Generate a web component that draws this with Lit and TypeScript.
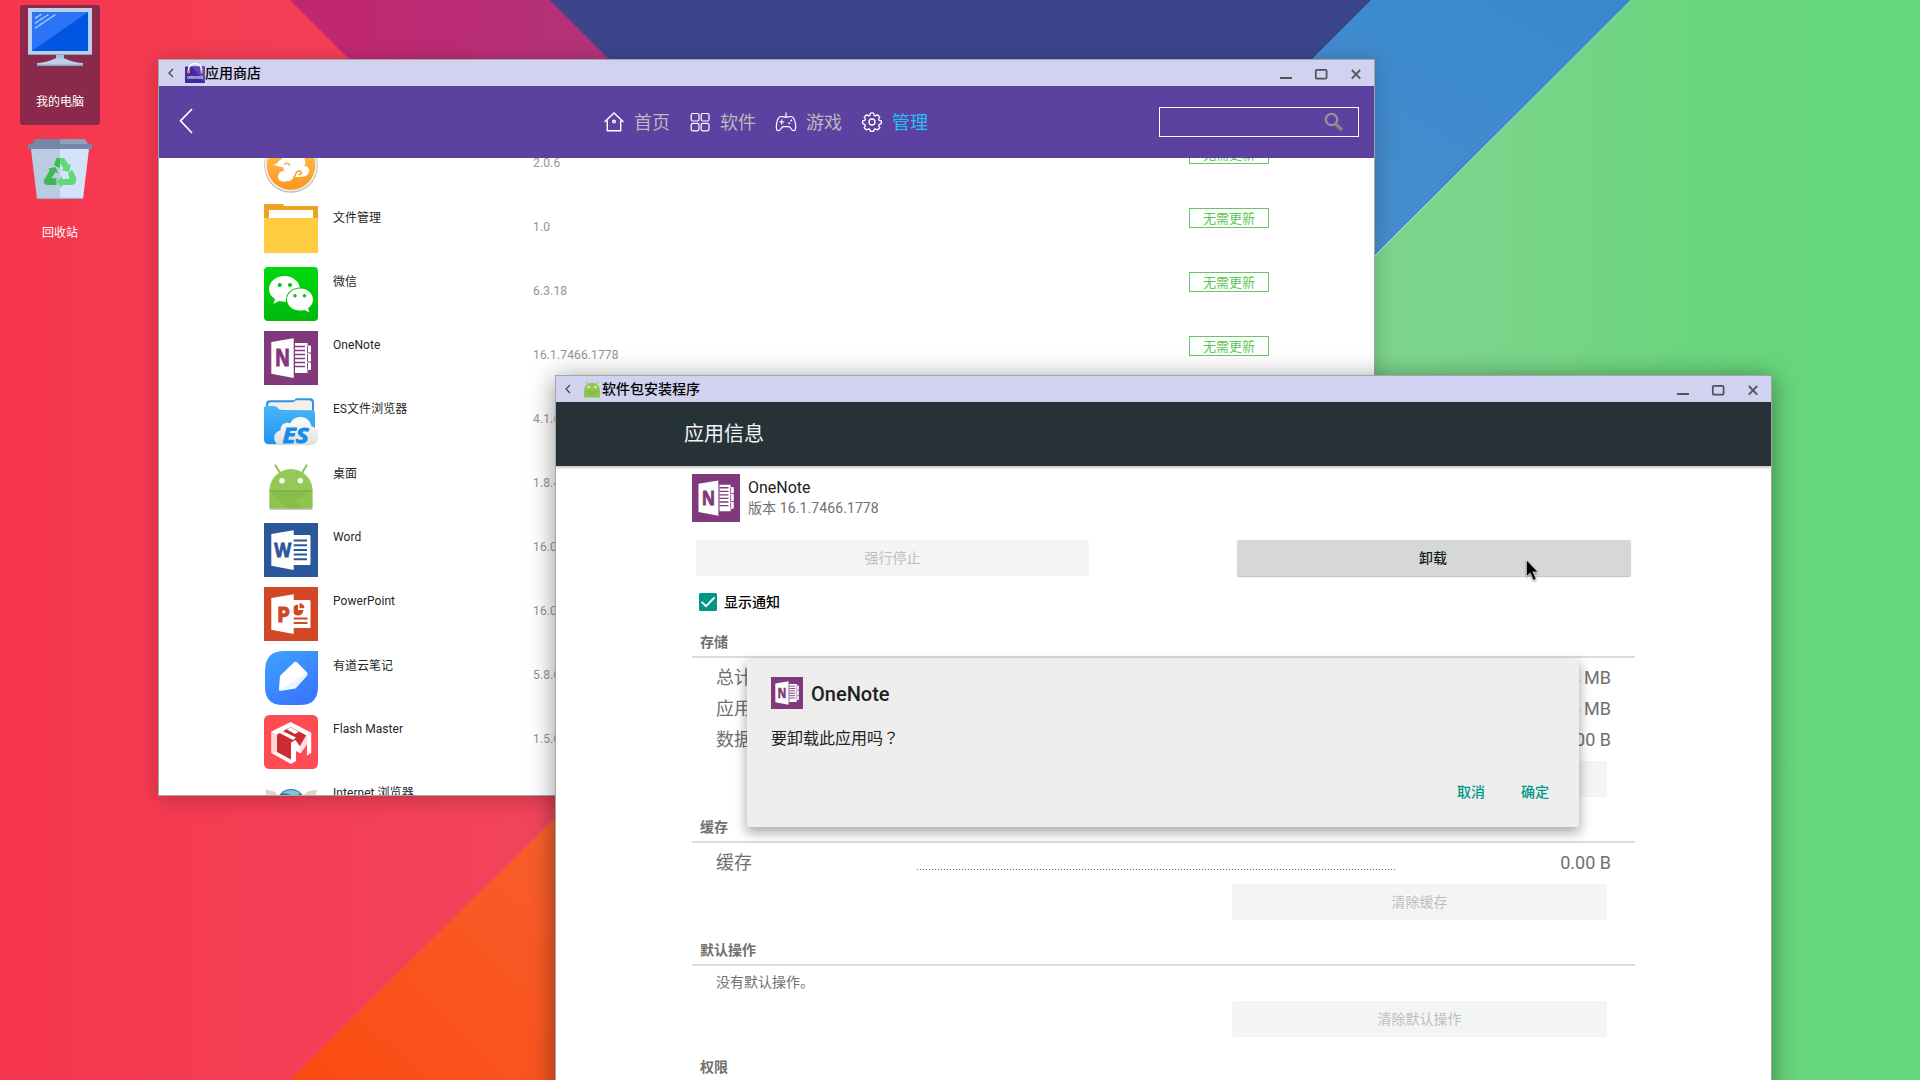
import { LitElement, html, svg, css } from "lit";
import { customElement, property } from "lit/decorators.js";

const officePage = svg`<path d="M7.3 11 29.7 7.3v39.6L7.3 42.8z" fill="#fff"/>`;

const icons: Record<string, [string, unknown]> = {
  computer: ["0 0 64 58", svg`
    <path d="M28 46h8v7h-8z" fill="#a9bfdd"/>
    <path d="M9 58v-3c7 0 14-2.500 18-4.500h10c4 2 11 4.500 18 4.500v3z" fill="#bcd0ea"/>
    <path d="M9 56.500h46V58H9z" fill="#8fa6c6"/>
    <path d="M0 0h64v47H0z" fill="#bcd0ea"/><path d="M0 46h64v1H0z" fill="#8fa6c6"/>
    <path d="M4 4h56v39H4z" fill="#0055e2"/><path d="M4 4h56L4 43z" fill="#2b74f5"/>
    <g stroke="#a9c8ff" stroke-width="1.500" stroke-linecap="round" stroke-dasharray="3 1.600 5 1.600 1 1.600">
      <path d="M7.500 10 13 6.500M7.500 15 20 6.800M7.500 20 27 6.800"/></g>`],
  trash: ["0 0 64 60", svg`
    <path d="M7 0h25v7H3z" fill="#7686a8"/><path d="M32 0h25l4 7H32z" fill="#90a0b8"/>
    <path d="M3 10h29v50H9z" fill="#b9cce4"/><path d="M32 10h29l-6 50H32z" fill="#d3e3f9"/>
    <path d="M9 58.700h46V60H9z" fill="#9db4cc"/>
    <path d="M0 5h64v5H0z" fill="#7686a8"/>
    <g fill="#3dbb50"><path d="M28.500 19H32v8.500l-1 1.500-5-3z"/><path d="m20.500 29.500 7-1.500 3 6.500-3-1.500-4 6 5 .500V46H20c-4 0-5-3-3.500-6l5-8z"/></g>
    <g fill="#62d877"><path d="M32 19h4l5 7 2-1-2 8-8-2 2.500-1.500L32 24z"/><path d="m40 34 4-3.500 3.500 6.500c2 4.500 0 9-4 9H34v3l-5-6 5-6v3h7.500z"/></g>`],
  shop: ["0 0 20 20", svg`
    <path d="M0 3.500h20V20H0z" fill="#3f2aa0"/><path d="M7 3.500h13V20z" fill="#5b47c0"/>
    <path d="M3.500 8.500V6.500a6.500 6 0 0 1 13 0v2" fill="none" stroke="#fff" stroke-width="1.600"/>
    <circle cx="3.500" cy="9" r="1.500" fill="#f68b1f"/><circle cx="16.500" cy="9" r="1.500" fill="#f68b1f"/>
    <text x="2" y="15.700" font-size="3.600" font-weight="700" textLength="16" fill="#d9d4f4">OPENTHOS</text>`],
  android: ["0 0 54 54", svg`
    <path d="M11.500 6.500 16 14M42.500 6.500 38 14" stroke="#97c167" stroke-width="2.200" stroke-linecap="round"/>
    <path d="M5.500 50V31a21.500 21 0 0 1 43 0v19z" fill="#c9c9c9" transform="translate(0 1)"/>
    <path d="M5.500 31.500a21.500 21.500 0 0 1 43 0z" fill="#93c954"/>
    <path d="M5.500 31.500h43V48a1.500 1.500 0 0 1-1.500 1.500H7A1.500 1.500 0 0 1 5.500 48z" fill="#8ec64d"/>
    <path d="m6 32 17.500 17.500h16L31 41 48 32z" fill="#83b848" opacity=".6"/>
    <path d="M5.500 31.200h43v1h-43z" fill="#77ad3e"/>
    <circle cx="18" cy="21.800" r="2.700" fill="#fff"/><circle cx="36.300" cy="21.800" r="2.700" fill="#fff"/>`],
  cloud: ["0 0 54 54", svg`
    <defs><linearGradient id="g" x2="0" y2="1"><stop stop-color="#ffc65a"/><stop offset="1" stop-color="#ff941f"/></linearGradient></defs>
    <circle cx="27" cy="27" r="26.800" fill="#b9b9b9"/><circle cx="27" cy="26.500" r="26" fill="#f3f3f3"/>
    <circle cx="27" cy="26.500" r="24.300" fill="url(#g)"/>
    <path d="M9 25c5 1 5-4 9-5 2-6 10-8 14-3 5-2 9 1 9 5 1 2 0 4-1 5 4 0 6 3 5 6-1 4-5 5-10 5h-4c-3 1-4 5-8 4-4 2-9 0-9-4 0-3 2-6 6-6l-1-4c-4 0-7-1-10-3z" fill="#fff"/>
    <path d="M30 38c2-1 1-6 5-6 3 0 3 4 0 3.500" fill="none" stroke="#ff9f2c" stroke-width="1.600" stroke-linecap="round"/>
    <path d="M20 26c2-3 5-2 6 1" fill="none" stroke="#ffae3c" stroke-width="1.500"/>`],
  folder: ["0 0 54 54", svg`
    <path d="M0 1h19l1 2h34v20H0z" fill="#eda322"/><path d="M5 7h44v10H5z" fill="#fff"/>
    <path d="M0 15h54v35H0z" fill="#ffcc42"/>`],
  wechat: ["0 0 54 54", svg`
    <defs><linearGradient id="g" x2="0" y2="1"><stop stop-color="#00d910"/><stop offset="1" stop-color="#00b80d"/></linearGradient></defs>
    <rect width="54" height="54" rx="4" fill="url(#g)"/>
    <path d="M20.500 9C11.800 9 5 14.800 5 22c0 4 2 7.500 6 10l-1.500 5 5.500-3c2 .6 3.800.8 5.500.8C29 34.800 36 29 36 22S29 9 20.500 9z" fill="#fff"/>
    <ellipse cx="36" cy="32.500" rx="14" ry="12" fill="#00c60e"/>
    <path d="M36 21.500c-7.200 0-13 4.800-13 11s5.800 11 13 11c1.500 0 3-.2 4.300-.6l5 2.300-1.300-4c3-2 5-5 5-8.700 0-6.200-5.800-11-13-11z" fill="#fff"/>
    <g fill="#00c60e"><circle cx="15.700" cy="18" r="2.100"/><circle cx="26" cy="18" r="2.100"/><circle cx="31" cy="28.700" r="1.700"/><circle cx="40.500" cy="28.700" r="1.700"/></g>`],
  onenote: ["0 0 54 54", svg`
    <path d="M0 0h54v54H0z" fill="#80397b"/>
    <path d="M31 12h12.500v2.500H46a1 1 0 0 1 1 1v6.500h-1v.8h1v8h-1v.8h1V38a1 1 0 0 1-1 1h-2.500v3H31z" fill="#fff"/>
    <path d="M31 15.500h10M31 19.500h10M31 23.500h10M31 27.500h10M31 31.500h10M31 35.500h10" stroke="#80397b" stroke-width="1.500"/>
    <path d="M43.500 15v7h3.500M43.500 23v8h3.500M43.500 32v6.500" stroke="#80397b" stroke-width=".9" fill="none"/>
    ${officePage}
    <text x="11" y="35.300" font-size="23" font-weight="700" textLength="15" lengthAdjust="spacingAndGlyphs" fill="#80397b" stroke="#80397b" stroke-width="1">N</text>`],
  word: ["0 0 54 54", svg`
    <path d="M0 0h54v54H0z" fill="#2a579a"/>
    <rect x="28" y="12" width="18.500" height="30" rx="1" fill="#fff"/>
    <path d="M29 17.500h14M29 22.200h14M29 26.900h14M29 31.600h14M29 36.300h14" stroke="#2a579a" stroke-width="2"/>
    ${officePage}
    <text x="10.300" y="33.500" font-size="19.500" font-weight="700" textLength="17" lengthAdjust="spacingAndGlyphs" fill="#2a579a" stroke="#2a579a" stroke-width=".8">W</text>`],
  powerpoint: ["0 0 54 54", svg`
    <path d="M0 0h54v54H0z" fill="#d24726"/>
    <rect x="28" y="13" width="18.500" height="28" rx="1" fill="#fff"/>
    <path d="M34 17.500v5.500h5.500a5.500 5.500 0 1 1-5.500-5.500z" fill="#d24726"/><path d="M35.500 16.200a5 5 0 0 1 5 5h-5z" fill="#d24726"/>
    <path d="M29 31.500h14.500M29 36h14.500" stroke="#d24726" stroke-width="2"/>
    ${officePage}
    <text x="13" y="34.700" font-size="21.500" font-weight="700" textLength="13" lengthAdjust="spacingAndGlyphs" fill="#d24726" stroke="#d24726" stroke-width="1">P</text>`],
  es: ["0 0 54 54", svg`
    <defs><linearGradient id="g" x2="0" y2="1"><stop stop-color="#4cb6f8"/><stop offset="1" stop-color="#1d93f0"/></linearGradient>
    <linearGradient id="c" x2="0" y2="1"><stop stop-color="#fff"/><stop offset="1" stop-color="#dedede"/></linearGradient></defs>
    <g transform="translate(0 2.300)">
    <path d="M2 14V7q0-4 4-4h24l2-2h14q4 0 4 4v12z" fill="#2f93e6"/>
    <path d="M4 12V8q0-3 3-3h22l3-2h13q3 0 3 3v8z" fill="#f3efe9"/>
    <path d="M0 11q0-3 3-2.500l9 .5 4 4h32q3 0 3 3v28q0 3-3 3H5q-5 0-5-5z" fill="url(#g)"/>
    <path d="M16 48c-9 0-10-13-1-15 0-6 5-9 10-7 3-9 19-9 21 3 9 2 11 18-2 19z" transform="translate(1.500 0)" fill="url(#c)"/></g>
    <text x="18.500" y="47.500" font-size="20.500" font-weight="700" font-style="italic" textLength="26" lengthAdjust="spacingAndGlyphs" fill="#168bea" stroke="#168bea" stroke-width=".9">ES</text>`],
  note: ["0 0 54 54", svg`
    <defs><linearGradient id="g" x2=".6" y2="1"><stop stop-color="#3fa3ff"/><stop offset="1" stop-color="#3877ff"/></linearGradient></defs>
    <path d="M1 20Q1 0 20 0h34v36q0 18-18 18H19Q1 54 1 36z" fill="url(#g)"/>
    <path d="M30 11.500q1.500-1.300 3 0l10 10q1.500 1.500 0 3.300L31.500 37.500 16 40q-1-.5-1-1.500l1-13.500z" fill="#e9f4ff"/>
    <path d="M30 11.500q1.500-1.300 3 0l10 10L15.500 39.500 16 25z" fill="#fff"/>`],
  flash: ["0 0 54 54", svg`
    <rect width="54" height="54" rx="5.500" fill="#ff4b52"/>
    <path d="M12 18 27 11l15 9-10 16-5 9-15-8z" fill="#cb2b31"/>
    <path d="M32 37 43 22v8l-6.500 9z" fill="#ff4b52"/>
    <path d="M7.500 16.500 26.500 7 47 17.500l-4.500 3-16-8.500L13 19.500V37l14 7.500V49L7.500 38z" fill="#fff"/>
    <path d="m7.500 16.500 5.500 3V37l-5.500 1z" fill="#ffd6d8"/>
    <path d="m15.500 18 3-2L32 22.500l-3 2.500zM23 14.500l3.500-2.300 8 4.500-3.500 2.300z" fill="#fff"/>
    <path d="M27 27.500 31.500 25 36 31.500 43 19.500 47.200 17.500V38L43 40.500V29L36.500 38.500 32 36V46L27 49z" fill="#fff"/>
    <path d="M43 19.500 36 31.500l.500 7L43 29z" fill="#ffdcde"/>`],
  internet: ["0 0 54 54", svg`
    <path d="M1 11c7 0 12 2 14 7L4 22zM53 11c-7 0-12 2-14 7l11 4z" fill="#e0d5c2"/>
    <circle cx="27" cy="24" r="14" fill="#2f76a8"/><path d="M18 14q9-6 18 0-4 4-9 2t-9-2z" fill="#7fc4e4"/>`],
  back: ["0 0 14 26", svg`<path d="M13 1 1.500 12.800 13 25" fill="none" stroke="#fff" stroke-width="1.700"/>`],
  chevron: ["0 0 6 10", svg`<path d="M5 1 1 5l4 4" fill="none" stroke="#444" stroke-width="1.200"/>`],
  minimize: ["0 0 14 14", svg`<path d="M1 11h12" stroke="#555" stroke-width="2"/>`],
  maximize: ["0 0 14 14", svg`<rect x="1.800" y="2.800" width="10.800" height="8.900" rx="1.200" fill="none" stroke="#505055" stroke-width="1.700"/>`],
  close: ["0 0 14 14", svg`<path d="m2.800 3 8.400 8.600M11.200 3l-8.400 8.600" stroke="#555" stroke-width="1.800"/>`],
  home: ["0 0 22 22", svg`<g fill="none" stroke="#fff" stroke-width="1.400"><path d="M1.500 11 11 2l9.500 9M4.300 9.500v10.300h13.400V9.500"/><circle cx="11" cy="10.600" r="1.300"/></g>`],
  grid: ["0 0 22 22", svg`<g fill="none" stroke="#fff" stroke-width="1.200"><rect x="2.200" y="2.500" width="7.800" height="7.500" rx="1.500"/><rect x="12.200" y="2.500" width="7.800" height="7.500" rx="1.500"/><rect x="2.200" y="12.300" width="7.800" height="7.500" rx="1.500"/><rect x="12.200" y="12.300" width="7.800" height="7.500" rx="1.500"/></g>`],
  gamepad: ["0 0 22 22", svg`<g fill="none" stroke="#fff" stroke-width="1.200"><path d="M11 1.500v4.800M11 6.300c-2 0-3-.8-5-.8C3 5.500 1.300 11 1.300 16c0 2 .7 3.700 2.200 3.700 2.300 0 2.500-4 5-4h5c2.500 0 2.700 4 5 4 1.500 0 2.200-1.700 2.200-3.700 0-5-1.700-10.500-4.700-10.500-2 0-3 .8-5 .8z"/><path d="M6.700 8.500v5M4.200 11h5"/></g><circle cx="14.200" cy="12.300" r="1" fill="#fff"/><circle cx="16.300" cy="9.500" r="1" fill="#fff"/>`],
  gear: ["0 0 22 22", svg`<g fill="none" stroke="#fff" stroke-width="1.300" stroke-linejoin="round"><circle cx="11" cy="11" r="3"/><path d="M9.300 2.200h3.400l.5 2.200 1.300.5 2-1.200 2.300 2.400-1.200 1.900.6 1.400 2.200.5v2.800l-2.200.6-.6 1.400 1.200 2-2.300 2.300-2-1.200-1.300.6-.5 2H9.300l-.5-2-1.300-.6-2 1.200-2.300-2.300 1.200-2-.6-1.400-2.200-.6V9.900l2.200-.5.6-1.400-1.200-1.900 2.300-2.400 2 1.200 1.300-.5z"/></g>`],
  search: ["0 0 20 20", svg`<circle cx="7.500" cy="7.500" r="5.700" fill="none" stroke="#959595" stroke-width="2.300"/><path d="m11.800 12 6.200 6.300" stroke="#858585" stroke-width="3.400"/>`],
  check: ["0 0 18 18", svg`<rect width="18" height="18" rx="1.500" fill="#009688"/><path d="m2.700 8.900 4.300 4.300 8.500-8.700" fill="none" stroke="#fff" stroke-width="1.800"/>`],
  cursor: ["0 0 16 24", svg`<path d="M1.500 1v16.500l3.700-3.600 3.200 7.300 2.700-1.200-3.200-7.100H13z" fill="#000" stroke="#ddd" stroke-width=".7"/>`],
};

@customElement("ui-icon")
export class UiIcon extends LitElement {
  @property() name = "";
  static styles = css`
    :host { display: block; flex: none; }
    .art { display: block; width: 100%; height: 100%; }
    text { font-family: "Open Sans", sans-serif; }
  `;
  render() {
    const [box, art] = icons[this.name];
    return html`<svg class="art" viewBox=${box}>${art}</svg>`;
  }
}

@customElement("ui-window")
export class UiWindow extends LitElement {
  @property() heading = "";
  @property() icon = "";
  static styles = css`
    :host {
      display: flex; flex-direction: column; box-sizing: border-box; width: 1217px; height: 737px;
      border: 1px solid #a5a5a5; background: #fff;
    }
    .title {
      flex: none; display: flex; align-items: center; height: 26px; background: #d1d1f0;
      font: 500 14px/26px Roboto, "Noto Sans CJK SC", sans-serif; color: #000;
    }
    .chevron { width: 6px; height: 10px; margin-left: 9px; }
    .app { width: 20px; height: 20px; margin-left: 11px; }
    .name { flex: 1; }
    .controls { display: flex; gap: 21px; padding-right: 11px; }
    .control { width: 14px; height: 14px; padding-top: 2px; }
    .content { flex: 1; min-height: 0; overflow: hidden; display: flex; flex-direction: column; }
  `;
  render() {
    return html`
      <div class="title">
        <ui-icon class="chevron" name="chevron"></ui-icon>
        <ui-icon class="app" name=${this.icon}></ui-icon>
        <span class="name">${this.heading}</span>
        <div class="controls">
          <ui-icon class="control" name="minimize"></ui-icon>
          <ui-icon class="control" name="maximize"></ui-icon>
          <ui-icon class="control" name="close"></ui-icon>
        </div>
      </div>
      <div class="content"><slot></slot></div>`;
  }
}

const apps = [
  ["cloud", "", "2.0.6"],
  ["folder", "文件管理", "1.0"],
  ["wechat", "微信", "6.3.18"],
  ["onenote", "OneNote", "16.1.7466.1778"],
  ["es", "ES文件浏览器", "4.1.6"],
  ["android", "桌面", "1.8.4"],
  ["word", "Word", "16.0"],
  ["powerpoint", "PowerPoint", "16.0"],
  ["note", "有道云笔记", "5.8.0"],
  ["flash", "Flash Master", "1.5.0"],
  ["internet", "Internet 浏览器", ""],
];

@customElement("store-view")
export class StoreView extends LitElement {
  static styles = css`
    :host { display: flex; flex-direction: column; height: 100%; font-family: Roboto, "Noto Sans CJK SC", sans-serif; }
    .bar { flex: none; height: 72px; background: #5c41a0; display: grid; grid-template-columns: 444px 1fr 200px; align-items: center; padding-right: 15px; }
    .back { width: 14px; height: 26px; margin: 0 0 2px 20px; }
    .nav { display: flex; gap: 19px; }
    .tab { display: flex; align-items: center; gap: 9px; font-size: 18px; line-height: 24px; color: #bababa; }
    .tab span { padding-top: 2px; }
    .tab.on { color: #27c0fb; }
    .glyph { width: 22px; height: 22px; }
    .search { box-sizing: border-box; height: 30px; border: 1px solid #fff; display: flex; align-items: center; justify-content: flex-end; padding-right: 14px; }
    .lens { width: 20px; height: 20px; }
    .list { flex: 1; min-height: 0; overflow: hidden; }
    .rows { margin-top: -19px; padding-left: 105px; }
    .row { height: 64px; display: grid; grid-template-columns: 54px 200px 656px 80px; align-items: start; font-size: 12px; line-height: 16px; }
    .pic { width: 54px; height: 54px; }
    .name { padding: 7px 0 0 15px; color: #262626; white-space: nowrap; }
    .name.latin { padding-top: 6px; letter-spacing: .05px; }
    .version { padding: 16px 0 0 15px; color: #939393; letter-spacing: .14px; }
    .state { box-sizing: border-box; margin: 5px 0 0 15px; width: 80px; height: 20px; border: 1px solid #66c95c; color: #5cc552; font-size: 13px; line-height: 19px; text-align: center; }
  `;
  render() {
    const tabs = [["home", "首页"], ["grid", "软件"], ["gamepad", "游戏"], ["gear", "管理"]];
    return html`
      <div class="bar">
        <ui-icon class="back" name="back"></ui-icon>
        <div class="nav">
          ${tabs.map(([icon, label], i) => html`
            <div class="tab ${i === 3 ? "on" : ""}"><ui-icon class="glyph" name=${icon}></ui-icon><span>${label}</span></div>`)}
        </div>
        <div class="search"><ui-icon class="lens" name="search"></ui-icon></div>
      </div>
      <div class="list"><div class="rows">
        ${apps.map(([icon, name, version]) => html`
          <div class="row">
            <ui-icon class="pic" name=${icon}></ui-icon>
            <span class="name ${/^[A-Z]/.test(name) ? "latin" : ""}">${name}</span>
            <span class="version">${version}</span>
            <div class="state">无需更新</div>
          </div>`)}
      </div></div>`;
  }
}

@customElement("app-details")
export class AppDetails extends LitElement {
  static styles = css`
    :host { display: flex; flex-direction: column; font-family: Roboto, "Noto Sans CJK SC", sans-serif; color: #707070; font-size: 14px; }
    .header { flex: none; height: 64px; padding-left: 128px; background: #273238; color: #f2f3f3; font-size: 20px; line-height: 65px; box-shadow: 0 2px 2px rgba(0, 0, 0, .22); }
    .body { width: 943px; margin-left: 136px; padding-top: 8px; }
    .app { display: flex; gap: 8px; height: 48px; }
    .logo { width: 48px; height: 48px; }
    .who { display: flex; flex-direction: column; padding-top: 3px; }
    .who b { font-weight: 400; font-size: 16px; line-height: 21px; color: #212121; }
    .who span { line-height: 20px; letter-spacing: .1px; }
    .actions { display: flex; justify-content: space-between; padding: 0 4px; margin-top: 18px; height: 36px; }
    .button { height: 36px; line-height: 36px; border-radius: 2px; background: #f3f5f5; color: #bcbebe; text-align: center; }
    .actions .button { width: 393px; }
    .actions .strong { box-sizing: border-box; width: 394px; padding-right: 2px; background: #d6d8d7; color: #1b1c1c; font-weight: 500; box-shadow: 0 1px 1px rgba(0, 0, 0, .25); }
    .notify { display: flex; align-items: center; gap: 7px; height: 52px; padding-left: 7px; color: #000; font-weight: 500; }
    .notify span { padding-bottom: 3px; }
    .check { width: 18px; height: 18px; }
    .heading { box-sizing: border-box; height: 30px; padding-left: 8px; line-height: 28px; border-bottom: 2px solid #dcdcdc; font-weight: 700; }
    .group { padding: 4px 24px 0; }
    .entry { display: flex; justify-content: space-between; height: 31px; line-height: 31px; font-size: 18px; }
    .dots { width: 480px; height: 1px; margin-top: 22px; margin-left: 165px; margin-right: auto; background: repeating-linear-gradient(90deg, #666 0 1px, transparent 1px 3px); }
    .note { height: 31px; line-height: 24px; }
    .clear { width: 375px; margin: 6px 28px 16px auto; }
    .clear.tight { margin-top: 0; }
  `;
  render() {
    return html`
      <div class="header">应用信息</div>
      <div class="body">
        <div class="app">
          <ui-icon class="logo" name="onenote"></ui-icon>
          <div class="who"><b>OneNote</b><span>版本 16.1.7466.1778</span></div>
        </div>
        <div class="actions"><div class="button">强行停止</div><div class="button strong">卸载</div></div>
        <div class="notify"><ui-icon class="check" name="check"></ui-icon><span>显示通知</span></div>
        <div class="heading">存储</div>
        <div class="group">
          <div class="entry"><span>总计</span><span>4 MB</span></div>
          <div class="entry"><span>应用</span><span>4 MB</span></div>
          <div class="entry"><span>数据</span><span>0.00 B</span></div>
        </div>
        <div class="button clear"></div>
        <div class="heading">缓存</div>
        <div class="group">
          <div class="entry"><span>缓存</span><i class="dots"></i><span>0.00 B</span></div>
        </div>
        <div class="button clear">清除缓存</div>
        <div class="heading">默认操作</div>
        <div class="group"><div class="note">没有默认操作。</div></div>
        <div class="button clear tight">清除默认操作</div>
        <div class="heading">权限</div>
      </div>`;
  }
}

@customElement("uninstall-dialog")
export class UninstallDialog extends LitElement {
  static styles = css`
    :host {
      display: flex; flex-direction: column; box-sizing: border-box; width: 832px; height: 168px; padding: 18px 24px 0;
      border-radius: 2px; background: #eee; box-shadow: 0 5px 12px 1px rgba(0, 0, 0, .33);
      font-family: Roboto, "Noto Sans CJK SC", sans-serif; color: #212121;
    }
    .head { display: flex; align-items: center; gap: 8px; height: 32px; font-size: 20px; font-weight: 500; }
    .head span { padding-top: 2px; }
    .logo { width: 32px; height: 32px; }
    .ask { margin-top: 18px; font-size: 16px; line-height: 24px; }
    .mark { font-family: "Noto Sans CJK TC", sans-serif; line-height: 1; }
    .choices { display: flex; justify-content: flex-end; gap: 36px; margin-top: 31px; padding-right: 6px; font-size: 14px; font-weight: 500; line-height: 20px; color: #009688; }
  `;
  render() {
    return html`
      <div class="head"><ui-icon class="logo" name="onenote"></ui-icon><span>OneNote</span></div>
      <div class="ask">要卸载此应用吗<span class="mark" lang="zh-TW">？</span></div>
      <div class="choices"><span>取消</span><span>确定</span></div>`;
  }
}

@customElement("app-root")
export class AppRoot extends LitElement {
  static styles = css`
    :host { display: block; position: relative; width: 1920px; height: 1080px; overflow: hidden; font-family: Roboto, "Noto Sans CJK SC", sans-serif; }
    .wallpaper { display: block; width: 1920px; height: 1080px; }
    .shortcuts, .store, .installer, .dialog, .pointer { position: absolute; }
    .shortcuts { left: 20px; top: 5px; display: flex; flex-direction: column; gap: 11px; }
    .shortcut { box-sizing: border-box; width: 80px; height: 120px; padding: 3px 0 15px; border-radius: 3px; display: flex; flex-direction: column; align-items: center; justify-content: space-between; color: #fff; font-size: 12px; line-height: 16px; }
    .shortcut.on { background: rgba(30, 28, 72, .5); }
    .pc { width: 64px; height: 58px; }
    .bin { width: 64px; height: 60px; }
    .store { left: 158px; top: 59px; box-shadow: 0 3px 20px rgba(0, 0, 0, .22); }
    .installer { left: 555px; top: 375px; box-shadow: 0 3px 24px rgba(0, 0, 0, .42); }
    .dialog { left: 747px; top: 659px; }
    .pointer { left: 1525px; top: 559px; width: 16px; height: 24px; filter: drop-shadow(0 1px 1px rgba(0, 0, 0, .4)); }
  `;
  render() {
    return html`
      <svg class="wallpaper" viewBox="0 0 1920 1080">
        <defs>
          <linearGradient id="red" x1="0" x2="1"><stop stop-color="#f6364d"/><stop offset="1" stop-color="#ef4f65"/></linearGradient>
          <linearGradient id="magenta" x1="0" y1="0" x2="1" y2="0"><stop stop-color="#c3256f"/><stop offset="1" stop-color="#b23379"/></linearGradient>
          <linearGradient id="blue" x1="1" y1="0" x2="0" y2="1"><stop stop-color="#3888cf"/><stop offset="1" stop-color="#5292cb"/></linearGradient>
          <linearGradient id="green" x1="0" x2="1"><stop stop-color="#84d592"/><stop offset=".45" stop-color="#78d588"/><stop offset=".75" stop-color="#68d57c"/><stop offset="1" stop-color="#63d77a"/></linearGradient>
          <linearGradient id="orange" x1="0" y1="1" x2="1" y2="0"><stop stop-color="#fc4a12"/><stop offset="1" stop-color="#f7602d"/></linearGradient>
        </defs>
        <rect width="900" height="1080" fill="url(#red)"/>
        <path d="M290 0h320v320z" fill="url(#magenta)"/>
        <path d="M550 0h830L965 415z" fill="#3a458b"/>
        <path d="M1371 0h260L1250 380H991z" fill="url(#blue)"/>
        <path d="M1631 0h289v1080H1200V431z" fill="url(#green)"/>
        <path d="M290 1080 560 813v267z" fill="url(#orange)"/>
      </svg>
      <div class="shortcuts">
        <div class="shortcut on"><ui-icon class="pc" name="computer"></ui-icon><span>我的电脑</span></div>
        <div class="shortcut"><ui-icon class="bin" name="trash"></ui-icon><span>回收站</span></div>
      </div>
      <ui-window class="store" heading="应用商店" icon="shop"><store-view></store-view></ui-window>
      <ui-window class="installer" heading="软件包安装程序" icon="android"><app-details></app-details></ui-window>
      <uninstall-dialog class="dialog"></uninstall-dialog>
      <ui-icon class="pointer" name="cursor"></ui-icon>`;
  }
}
